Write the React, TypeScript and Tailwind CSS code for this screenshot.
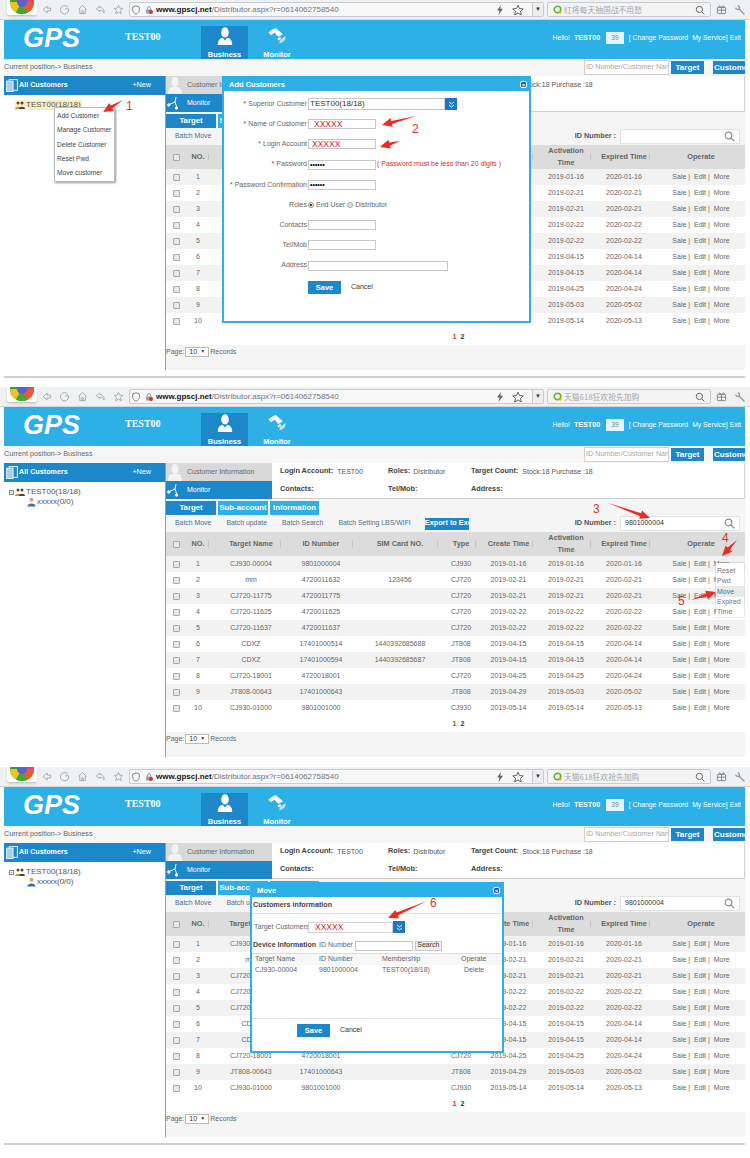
import React from "react";

const ROWS = [
  ["1", "CJ930-00004", "9801000004", "", "CJ930", "2019-01-16", "2019-01-16", "2020-01-16"],
  ["2", "mm", "4720011632", "123456", "CJ720", "2019-02-21", "2019-02-21", "2020-02-21"],
  ["3", "CJ720-11775", "4720011775", "", "CJ720", "2019-02-21", "2019-02-21", "2020-02-21"],
  ["4", "CJ720-11625", "4720011625", "", "CJ720", "2019-02-22", "2019-02-22", "2020-02-22"],
  ["5", "CJ720-11637", "4720011637", "", "CJ720", "2019-02-22", "2019-02-22", "2020-02-22"],
  ["6", "CDXZ", "17401000514", "1440392685688", "JT808", "2019-04-15", "2019-04-15", "2020-04-14"],
  ["7", "CDXZ", "17401000594", "1440392685687", "JT808", "2019-04-15", "2019-04-15", "2020-04-14"],
  ["8", "CJ720-18001", "4720018001", "", "CJ720", "2019-04-25", "2019-04-25", "2020-04-24"],
  ["9", "JT808-00643", "17401000643", "", "JT808", "2019-04-29", "2019-05-03", "2020-05-02"],
  ["10", "CJ930-01000", "9801001000", "", "CJ930", "2019-05-14", "2019-05-14", "2020-05-13"],
];

const COLS = "grid grid-cols-[21px_22px_84px_56px_102px_20px_75px_40px_76px_78px_1fr]";

function Cell({ children, sep }: { children?: React.ReactNode; sep?: string }) {
  return (
    <div className="relative flex items-center justify-center whitespace-nowrap">
      {children}
      {sep && <span className={`absolute top-1/2 h-[7px] w-px -translate-y-1/2 bg-[#c4c4c4] ${sep}`} />}
    </div>
  );
}

function Check() {
  return <span className="block h-[7px] w-[7px] rounded-[1px] border border-[#a9a9a9] bg-[#e8e8e8]" />;
}

function Arrow({ x1, y1, x2, y2 }: { x1: number; y1: number; x2: number; y2: number }) {
  const dx = x2 - x1;
  const dy = y2 - y1;
  const len = Math.hypot(dx, dy);
  const ux = dx / len;
  const uy = dy / len;
  const nx = -uy;
  const ny = ux;
  const hx = x2 - ux * 10;
  const hy = y2 - uy * 10;
  const pts = [
    [x1, y1],
    [hx + nx * 1.6, hy + ny * 1.6],
    [hx + nx * 4.5, hy + ny * 4.5],
    [x2, y2],
    [hx - nx * 4.5, hy - ny * 4.5],
    [hx - nx * 1.6, hy - ny * 1.6],
  ]
    .map((p) => p.join(","))
    .join(" ");
  return <polygon points={pts} fill="#ee2b24" />;
}

function Overlay({
  arrows,
  nums,
}: {
  arrows: [number, number, number, number][];
  nums: [string, number, number][];
}) {
  return (
    <>
      <svg className="pointer-events-none absolute left-0 top-0 z-30 h-[370px] w-[750px]" viewBox="0 0 750 370">
        {arrows.map((a, i) => (
          <Arrow key={i} x1={a[0]} y1={a[1]} x2={a[2]} y2={a[3]} />
        ))}
      </svg>
      {nums.map(([n, x, y]) => (
        <span
          key={n}
          className="absolute z-30 font-['Liberation_Sans',sans-serif] text-[12px] leading-none text-[#d9342b]"
          style={{ left: x, top: y }}
        >
          {n}
        </span>
      ))}
    </>
  );
}

function LogoPie() {
  return (
    <svg width="24" height="15" viewBox="0 0 24 15" className="block">
      <circle cx="12" cy="2" r="12" fill="#3c9e3a" />
      <path d="M12 2 L0 2 A12 12 0 0 0 6 12.4 Z" fill="#f0c419" />
      <path d="M12 2 L6 12.4 A12 12 0 0 0 17 13 Z" fill="#46a63c" />
      <path d="M12 2 L17 13 A12 12 0 0 0 24 2 Z" fill="#ec5a2e" />
      <path d="M12 2 L24 2 A12 12 0 0 0 22 -5 Z" fill="#d8408a" />
      <circle cx="12" cy="2" r="5" fill="#5b5fd0" />
    </svg>
  );
}

function NavIcon({ d }: { d: string }) {
  return (
    <svg width="11" height="11" viewBox="0 0 16 16" fill="none" stroke="#9aa0a6" strokeWidth="1.2">
      <path d={d} />
    </svg>
  );
}

function BrowserBar({ search }: { search: string }) {
  return (
    <div className="flex h-[20px] items-center border-b border-[#d4d6d8] bg-[#f0f1f2] pr-[4px] font-['Liberation_Sans',sans-serif]">
      <div className="ml-[7px] h-[16px] w-[30px] self-start overflow-hidden rounded-b-[3px] border-b border-[#c9c9c9] bg-white px-[3px] shadow-sm">
        <LogoPie />
      </div>
      <div className="ml-[4px] flex items-center gap-[7px]">
        <NavIcon d="M9 3 L3 8 L9 13 V10 H14 V6 H9 Z" />
        <NavIcon d="M13 5 A6 6 0 1 0 14 9 M9 7 H14 V10" />
        <NavIcon d="M2 8 L8 2 L14 8 M4 7 V14 H12 V7 M7 14 V10 H9 V14" />
        <NavIcon d="M7 3 L2 7 L7 11 V9 C10 9 12 10 13 13 C14 8 11 5 7 5 Z" />
        <NavIcon d="M8 2 L10 6 L14 6.5 L11 9.5 L12 14 L8 12 L4 14 L5 9.5 L2 6.5 L6 6 Z" />
      </div>
      <div className="ml-[5px] flex h-[15px] flex-1 items-center rounded-[2px] border border-[#c8ccd0] bg-[#f8f8f8] pl-[2px]">
        <svg width="8" height="10" viewBox="0 0 8 10" fill="none" stroke="#7d8893" strokeWidth="1">
          <path d="M4 .8 L7.3 2 V5 C7.3 7 6 8.4 4 9.3 C2 8.4 .7 7 .7 5 V2 Z" />
        </svg>
        <svg width="8" height="8" viewBox="0 0 8 8" className="ml-[5px]">
          <rect x="1" y="3.5" width="6" height="4" fill="#9aa0a6" />
          <circle cx="6" cy="6" r="2" fill="#d9342b" />
          <path d="M2.5 3.5 V2 A1.5 1.5 0 0 1 5.5 2 V3.5" fill="none" stroke="#9aa0a6" />
        </svg>
        <span className="ml-[3px] whitespace-nowrap text-[8px] leading-none text-[#6f7680]">
          <b className="text-[#161616]">www.gpscj.net</b>/Distributor.aspx?r=0614062758540
        </span>
        <svg width="6" height="10" viewBox="0 0 6 10" fill="#666" className="ml-auto mr-[9px]">
          <path d="M4 0 L0 5.5 H2.5 L1.5 10 L6 3.8 H3.3 Z" />
        </svg>
        <svg width="12" height="12" viewBox="0 0 16 16" fill="none" stroke="#555" strokeWidth="1.2" className="mr-[8px]">
          <path d="M8 1.5 L10 6 L15 6.5 L11.3 9.8 L12.4 14.6 L8 12 L3.6 14.6 L4.7 9.8 L1 6.5 L6 6 Z" />
        </svg>
        <span className="flex h-full w-[11px] items-center justify-center border-l border-[#c8ccd0] bg-[#eee] text-[6px] text-[#333]">▼</span>
      </div>
      <div className="ml-[3px] flex h-[15px] w-[164px] items-center rounded-[2px] border border-[#c8ccd0] bg-[#f4f4f4] px-[5px]">
        <svg width="9" height="9" viewBox="0 0 10 10" fill="none" strokeWidth="1.8">
          <circle cx="5" cy="5" r="3.6" stroke="#5cb531" />
          <path d="M6.5 6.5 L9 9" stroke="#f0a51e" />
        </svg>
        <span className="ml-[2px] whitespace-nowrap font-['Noto_Sans_CJK_SC','Liberation_Sans',sans-serif] text-[7.8px] leading-none text-[#a3a7ab]">{search}</span>
        <svg width="10" height="10" viewBox="0 0 16 16" fill="none" stroke="#666" strokeWidth="1.6" className="ml-auto">
          <circle cx="7" cy="7" r="5" />
          <path d="M11 11 L15 15" />
        </svg>
      </div>
      <svg width="11" height="11" viewBox="0 0 16 16" fill="none" stroke="#777" strokeWidth="1.2" className="ml-[5px]">
        <rect x="2" y="5" width="12" height="9" rx="1" />
        <path d="M2 9 H14 M8 5 V14 M8 5 C5 1 3 3 5 5 M8 5 C11 1 13 3 11 5" />
      </svg>
      <svg width="12" height="12" viewBox="0 0 16 16" fill="none" stroke="#999" strokeWidth="1.8" className="ml-[7px]">
        <path d="M6 6 L14 14 M2 5 A4 4 0 0 0 7 7 M5 2 A4 4 0 0 1 7 7" />
      </svg>
    </div>
  );
}

function GpsHeader({ count }: { count: string }) {
  return (
    <div className="ml-[4px] mr-[5px] flex h-[39px] bg-[#2cb0e5] font-['Liberation_Sans',sans-serif] text-white">
      <div className="w-[75px] pl-[19px] pt-[2px] text-[27px] font-bold italic leading-[32px]">GPS</div>
      <div className="ml-[46px] w-[76px] pt-[11px] font-['Liberation_Serif',serif] text-[10px] font-bold leading-[12px]">TEST00</div>
      <div className="mt-[6px] flex h-[33px] w-[47px] flex-col items-center bg-[#1d88c9] pt-[1px] text-[7.5px] font-bold">
        <svg width="16" height="19" viewBox="0 0 16 21" fill="white">
          <ellipse cx="8" cy="6" rx="4.2" ry="5.6" />
          <path d="M0 20 C0 14 3 12.5 5.5 12 L8 15 L10.5 12 C13 12.5 16 14 16 20 Z" />
        </svg>
        <span className="mt-[5px] leading-[8px]">Business</span>
      </div>
      <div className="ml-[4px] mt-[6px] flex h-[33px] w-[50px] flex-col items-center pt-[1px] text-[7.5px] font-bold">
        <svg width="20" height="19" viewBox="0 0 21 21" fill="white">
          <path d="M5 3 L9 1 L17 8 L12 11 Z" />
          <path d="M1 6 L5 3 L8 6 L4 9 Z" />
          <path d="M11 13 L14 11 L15 13 L12 15 Z" />
          <path d="M13 18 A7 7 0 0 0 20 10 L14 14 Z" fill="#bfe3f5" />
        </svg>
        <span className="mt-[5px] leading-[8px]">Monitor</span>
      </div>
      <div className="ml-auto flex items-center self-start whitespace-nowrap pr-[4px] pt-[12px] text-[6.8px] leading-[12px]">
        <span>Hello!</span>
        <b className="ml-[4px] text-[7.2px]">TEST00</b>
        <span className="ml-[6px] bg-[#e6f4fb] px-[5px] text-[#7a8a94]">{count}</span>
        <span className="ml-[5px]">[ Change Password</span>
        <span className="ml-[4px]">My Service]</span>
        <span className="ml-[2px]">Exit</span>
      </div>
    </div>
  );
}

function Breadcrumb() {
  return (
    <div className="ml-[4px] mr-[5px] flex h-[17px] items-center bg-[#f6f6f6] font-['Liberation_Sans',sans-serif] text-[7.2px] text-[#666]">
      <span>Current position-&gt; Business</span>
      <div className="ml-auto flex h-[15px] w-[85px] items-center overflow-hidden whitespace-nowrap border border-[#d0d0d0] bg-white pl-[1px] text-[7.2px] text-[#a8a8a8]">
        ID Number/Customer Name
      </div>
      <span className="ml-[2px] flex h-[13px] w-[33px] items-center justify-center bg-[#1d88c9] text-[8px] font-bold text-white">Target</span>
      <span className="ml-[9px] flex h-[13px] w-[32px] items-center overflow-hidden whitespace-nowrap bg-[#1d88c9] pl-[1px] text-[8px] font-bold text-white">Customer Information</span>
    </div>
  );
}

function Tree({ menu }: { menu?: boolean }) {
  return (
    <div className="w-[161px] bg-white">
      <div className="flex h-[19px] items-center bg-[#1d88c9] pl-[2px] pr-[14px] text-[7.2px] font-bold text-white">
        <svg width="12" height="13" viewBox="0 0 11 12" fill="none" stroke="#d5e9f5" strokeWidth="1">
          <rect x="3" y=".5" width="7.5" height="10" />
          <rect x=".5" y="2" width="6" height="9.5" fill="#a9cfe8" />
        </svg>
        <span className="ml-[1px]">All Customers</span>
        <span className="ml-auto font-normal">+New</span>
      </div>
      <div className="relative pl-[11px] pt-[5px] text-[8px] leading-[10px] text-[#555]">
        {menu ? (
          <div className="flex items-center">
            <span className="flex w-fit items-center bg-[#fbeec6] pr-[1px] text-[#555]">
              <GroupIcon />
              TEST00(18/18)
            </span>
          </div>
        ) : (
          <>
            <div className="-ml-[6px] flex items-center">
              <span className="mr-[1px] flex h-[5px] w-[5px] items-center justify-center border border-[#888] text-[5px] leading-none">−</span>
              <GroupIcon />
              <span>TEST00(18/18)</span>
            </div>
            <div className="ml-[12px] flex items-center">
              <UserIcon />
              <span>xxxxx(0/0)</span>
            </div>
          </>
        )}
        {menu && (
          <div className="absolute left-[50px] top-[12px] z-10 flex w-[61px] flex-col border border-[#bbb] bg-white py-[1px] pl-[2px] shadow-[1px_1px_2px_rgba(0,0,0,0.4)]">
            {["Add Customer", "Manage Customer", "Delete Customer", "Reset Pwd", "Move customer"].map((t) => (
              <span key={t} className="whitespace-nowrap text-[6.6px] leading-[14.3px] text-[#444]">{t}</span>
            ))}
          </div>
        )}
      </div>
    </div>
  );
}

function GroupIcon() {
  return (
    <svg width="10" height="8" viewBox="0 0 10 8" className="mr-[1px]">
      <circle cx="3" cy="2" r="1.5" fill="#6b4a2a" />
      <circle cx="7" cy="2" r="1.5" fill="#444" />
      <path d="M0 8 C0 5 6 5 6 8 Z" fill="#c9963c" />
      <path d="M4 8 C4 5 10 5 10 8 Z" fill="#444" />
    </svg>
  );
}

function UserIcon() {
  return (
    <svg width="9" height="10" viewBox="0 0 10 10" className="mr-[1px]">
      <circle cx="5" cy="2.5" r="2.2" fill="#d9a36c" />
      <path d="M0.5 10 C0.5 5.5 9.5 5.5 9.5 10 Z" fill="#2d6fb8" />
    </svg>
  );
}

function InfoArea() {
  return (
    <div className="flex h-[36px] border-b border-r border-[#cfcfcf] bg-white text-[7px] text-[#555]">
      <div className="w-[106px] shrink-0">
        <div className="flex h-[18px] items-center overflow-hidden bg-[#d9d9d9] text-[#666]">
          <svg width="14" height="18" viewBox="0 0 14 18" fill="#f4f4f4" className="ml-[2px]">
            <ellipse cx="7" cy="6" rx="3.6" ry="5" />
            <path d="M0 18 C0 12 3 11 5 11 L9 11 C11 11 14 12 14 18 Z" />
          </svg>
          <span className="ml-[5px]">Customer Information</span>
        </div>
        <div className="flex h-[18px] items-center bg-[#1d88c9] text-white">
          <svg width="14" height="14" viewBox="0 0 14 14" fill="none" stroke="white" strokeWidth="1" className="ml-[1px]">
            <path d="M1 9 L8 6 L9 1 M8 6 L10 12" />
            <circle cx="1.8" cy="9" r="1.2" fill="white" />
            <circle cx="9.5" cy="12" r="1.2" fill="white" />
          </svg>
          <span className="ml-[6px]">Monitor</span>
        </div>
      </div>
      <div className="grid flex-1 grid-cols-[108px_83px_1fr] grid-rows-2 pl-[8px]">
        <div className="flex items-center"><b className="mr-[4px] text-[7.3px] text-[#444]">Login Account:</b>TEST00</div>
        <div className="flex items-center"><b className="mr-[3px] text-[7.3px] text-[#444]">Roles:</b>Distributor</div>
        <div className="flex items-center"><b className="mr-[4px] text-[7.3px] text-[#444]">Target Count:</b>Stock:18 Purchase :18</div>
        <div className="flex items-center"><b className="text-[7.3px] text-[#444]">Contacts:</b></div>
        <div className="flex items-center"><b className="text-[7.3px] text-[#444]">Tel/Mob:</b></div>
        <div className="flex items-center"><b className="text-[7.3px] text-[#444]">Address:</b></div>
      </div>
    </div>
  );
}

function Toolbar({ value }: { value: string }) {
  return (
    <>
      <div className="mt-[2px] flex h-[14px] items-stretch text-[7.8px] font-bold text-white">
        <span className="flex w-[50px] items-center justify-center bg-[#1d88c9]">Target</span>
        <span className="ml-[2px] flex w-[50px] items-center justify-center bg-[#2cb0e5]">Sub-account</span>
        <span className="ml-[2px] flex w-[49px] items-center justify-center bg-[#2cb0e5]">Information</span>
      </div>
      <div className="flex h-[17px] items-center whitespace-nowrap pl-[9px] pr-[5px] text-[6.9px] text-[#4c6d8f]">
        <span>Batch Move</span>
        <span className="ml-[15px]">Batch update</span>
        <span className="ml-[15px]">Batch Search</span>
        <span className="ml-[15px]">Batch Setting LBS/WIFI</span>
        <span className="ml-[14px] flex h-[12px] w-[44px] items-center overflow-hidden bg-[#1d88c9] text-[7.3px] font-bold text-white">Export to Excel</span>
        <b className="ml-auto text-[7.3px] text-[#555]">ID Number :</b>
        <div className="ml-[4px] flex h-[15px] w-[120px] items-center border border-[#e2e2e2] bg-white pl-[4px] pr-[4px] text-[7px] text-[#333]">
          <span>{value}</span>
          <svg width="11" height="11" viewBox="0 0 16 16" fill="none" stroke="#8d8d8d" strokeWidth="1.8" className="ml-auto">
            <circle cx="6.5" cy="6.5" r="4.8" />
            <path d="M10 10 L15 15" />
          </svg>
        </div>
      </div>
    </>
  );
}

function Table() {
  const heads: [React.ReactNode, string][] = [
    [<Check key="c" />, ""],
    ["NO.", "right-0"],
    ["Target Name", "right-[12px]"],
    ["ID Number", "right-[-4px]"],
    ["SIM Card NO.", "right-[13px]"],
    ["Type", "right-[-5px]"],
    ["Create Time", "right-[13px]"],
    [<span key="a" className="text-center leading-[12px]">Activation<br />Time</span>, "right-[-5px]"],
    ["Expired Time", "right-[12px]"],
    ["Operate", ""],
    ["", ""],
  ];
  return (
    <div className="text-[7px] text-[#666]">
      <div className={`${COLS} h-[24px] bg-[#dcdcdc] text-[7.3px] font-bold text-[#666]`}>
        {heads.map((h, i) => (
          <Cell key={i} sep={h[1]}>{h[0]}</Cell>
        ))}
      </div>
      {ROWS.map((r, i) => (
        <div key={r[0]} className={`${COLS} h-[16px] ${i % 2 ? "bg-white" : "bg-[#f2f2f2]"}`}>
          <Cell><Check /></Cell>
          {r.map((c, j) => (
            <Cell key={j}>{c}</Cell>
          ))}
          <Cell>Sale&nbsp;|&nbsp;&nbsp;Edit&nbsp;|&nbsp;&nbsp;More</Cell>
          <Cell />
        </div>
      ))}
    </div>
  );
}

function Pager() {
  return (
    <>
      <div className="flex h-[16px] items-center justify-center bg-white pl-[6px] text-[7.3px] font-bold text-[#333]">
        <span className="text-[#d9342b]">1</span>
        <span className="ml-[4px]">2</span>
      </div>
      <div className="flex h-[14px] items-center bg-[#f5f5f5] text-[7px] text-[#666]">
        Page:
        <span className="ml-px flex h-[10px] w-[24px] items-center justify-between border border-[#bbb] bg-white px-[3px] text-[#333]">10<span className="text-[5px]">▼</span></span>
        <span className="ml-px">Records</span>
      </div>
    </>
  );
}

function Panel({
  search,
  count,
  value,
  menu,
  children,
}: {
  search: string;
  count: string;
  value: string;
  menu?: boolean;
  children?: React.ReactNode;
}) {
  return (
    <section className="relative h-[370px] overflow-hidden font-['Liberation_Sans',sans-serif]">
      <BrowserBar search={search} />
      <GpsHeader count={count} />
      <Breadcrumb />
      <div className="ml-[4px] mr-[5px] flex h-[294px]">
        <Tree menu={menu} />
        <div className="flex-1 overflow-hidden border-l border-[#9a9a9a] bg-[#f5f5f5]">
          <InfoArea />
          <Toolbar value={value} />
          <Table />
          <Pager />
        </div>
      </div>
      {children}
    </section>
  );
}

function Modal({
  title,
  className,
  children,
}: {
  title: string;
  className: string;
  children: React.ReactNode;
}) {
  return (
    <div className={`absolute z-20 flex flex-col border-2 border-[#2cb0e5] bg-white font-['Liberation_Sans',sans-serif] text-[7px] text-[#666] ${className}`}>
      <div className="flex h-[13px] shrink-0 items-center bg-[#2cb0e5] pl-[5px] pr-[2px] text-[7.5px] font-bold text-white">
        {title}
        <span className="ml-auto flex h-[7px] w-[7px] items-center justify-center rounded-[2px] border border-white bg-[#2b55b5] text-[6px] leading-none">×</span>
      </div>
      {children}
    </div>
  );
}

const fieldCls = "h-[10px] border border-[#c7c7c7] bg-white";

function FormRow({ label, req, children }: { label: string; req?: boolean; children?: React.ReactNode }) {
  return (
    <div className="flex h-[20.2px] items-center">
      <div className="w-[83px] whitespace-nowrap text-right">
        {req && <span className="text-[#e02020]">* </span>}
        {label}
      </div>
      <div className="flex items-center pl-[1px]">{children}</div>
    </div>
  );
}

const Drop = () => (
  <span className="flex h-[12px] w-[12px] items-center justify-center bg-[#1d78c4]">
    <svg width="7" height="7" viewBox="0 0 7 7" fill="none" stroke="white" strokeWidth="0.9">
      <path d="M1 1 L3.5 3 L6 1 M1 4 L3.5 6 L6 4" />
    </svg>
  </span>
);

function AddCustomerModal() {
  return (
    <Modal title="Add Customers" className="left-[222px] top-[76px] h-[247px] w-[309px]">
      <div className="flex flex-col pt-[3px]">
        <FormRow label="Superior Customer" req>
          <div className="flex items-center">
            <span className="flex h-[12px] w-[137px] items-center border border-[#c7c7c7] bg-white pl-px text-[8px] text-[#333]">TEST00(18/18)</span>
            <Drop />
          </div>
        </FormRow>
        <FormRow label="Name of Customer" req>
          <span className={`${fieldCls} flex w-[68px] items-center pl-[5px] text-[8.5px] text-[#e02020]`}>XXXXX</span>
        </FormRow>
        <FormRow label="Login Account" req>
          <span className={`${fieldCls} flex w-[68px] items-center pl-[3px] text-[8.5px] text-[#e02020]`}>XXXXX</span>
        </FormRow>
        <FormRow label="Password" req>
          <span className={`${fieldCls} flex w-[68px] items-center pl-px text-[7px] leading-none text-black`}>••••••</span>
          <span className="ml-[1px] whitespace-nowrap text-[#d0312d]">( Password must be less than 20 digits )</span>
        </FormRow>
        <FormRow label="Password Confirmation" req>
          <span className={`${fieldCls} flex w-[68px] items-center pl-px text-[7px] leading-none text-black`}>••••••</span>
        </FormRow>
        <FormRow label="Roles">
          <span className="h-[6px] w-[6px] rounded-full border border-[#999] bg-[radial-gradient(circle,#444_35%,#e8e8e8_40%)]" />
          <span className="ml-[2px]">End User</span>
          <span className="ml-[2px] h-[6px] w-[6px] rounded-full border border-[#aaa] bg-[#e4e4e4]" />
          <span className="ml-[2px]">Distributor</span>
        </FormRow>
        <FormRow label="Contacts"><span className={`${fieldCls} w-[68px]`} /></FormRow>
        <FormRow label="Tel/Mob"><span className={`${fieldCls} w-[68px]`} /></FormRow>
        <FormRow label="Address"><span className={`${fieldCls} w-[140px]`} /></FormRow>
        <div className="mt-[5px] flex items-center pl-[84px]">
          <span className="flex h-[13px] w-[33px] items-center justify-center bg-[#1d88c9] text-[7.5px] font-bold text-white">Save</span>
          <span className="ml-[10px] text-[#333]">Cancel</span>
        </div>
      </div>
    </Modal>
  );
}

function MoveModal() {
  return (
    <Modal title="Move" className="left-[250px] top-[115px] h-[171px] w-[254px]">
      <div className="flex flex-1 flex-col">
        <div className="flex h-[17px] items-center border-b border-[#ddd] pl-[1px] text-[7.2px] font-bold text-[#444]">Customers information</div>
        <div className="mt-[6px] flex h-[14px] items-center pl-[2px]">
          <span className="w-[54px] whitespace-nowrap">Target Customers</span>
          <span className="flex h-[11px] w-[85px] items-center border border-[#d4d4d4] bg-white pl-[6px] text-[8.5px] text-[#e02020]">XXXXX</span>
          <Drop />
        </div>
        <div className="mt-[5px] flex h-[13px] items-center pl-[1px]">
          <b className="text-[7px] text-[#444]">Device Information</b>
          <span className="ml-[3px]">ID Number</span>
          <span className={`${fieldCls} ml-[2px] w-[58px]`} />
          <span className="ml-[2px] flex h-[10px] w-[27px] items-center justify-center border border-[#c7c7c7] bg-[#f1f1f1] text-[#333]">Search</span>
        </div>
        <div className="mt-[1px] grid h-[12px] grid-cols-[64px_63px_79px_1fr] items-center border-t border-[#ddd] bg-[#f7f7f7] pl-[3px]">
          <span>Target Name</span><span>ID Number</span><span>Membership</span><span>Operate</span>
        </div>
        <div className="grid h-[11px] grid-cols-[64px_63px_79px_1fr] items-center pl-[3px]">
          <span>CJ930-00004</span><span>9801000004</span><span>TEST00(18/18)</span><span className="pl-[3px]">Delete</span>
        </div>
        <div className="mt-[42px] flex items-center border-t border-[#e2e2e2] pl-[45px] pt-[5px]">
          <span className="flex h-[13px] w-[33px] items-center justify-center bg-[#1d88c9] text-[7.5px] font-bold text-white">Save</span>
          <span className="ml-[10px] text-[#333]">Cancel</span>
        </div>
      </div>
    </Modal>
  );
}

function MoreMenu() {
  return (
    <div className="absolute left-[716px] top-[176px] z-20 flex w-[28px] flex-col bg-white pt-[3px] font-['Liberation_Sans',sans-serif] text-[7px] leading-[10px] text-[#777] shadow-[0_0_1px_rgba(0,0,0,0.5)]">
      <span className="pl-px">Reset<br />Pwd</span>
      <span className="bg-[#eaeaea] pl-px leading-[11px] text-[#3a6ea5]">Move</span>
      <span className="pl-px">Expired<br />Time</span>
    </div>
  );
}

export default function App() {
  return (
    <div className="w-[750px] bg-white">
      <Panel search="红将每天抽国战不用愁" count="39" value="" menu>
        <AddCustomerModal />
        <Overlay
          arrows={[[123, 100, 103, 112], [416, 116, 382, 125], [400, 141, 380, 147]]}
          nums={[["1", 126, 100], ["2", 412, 123]]}
        />
      </Panel>
      <div className="mb-[9px] ml-[4px] mt-[6px] h-[2px] w-[741px] bg-[#cfcfcf]" />
      <Panel search="天猫618狂欢抢先加购" count="39" value="9801000004">
        <MoreMenu />
        <Overlay
          arrows={[[608, 116, 650, 131], [737, 153, 722, 169], [691, 213, 716, 205]]}
          nums={[["3", 593, 116], ["4", 722, 145], ["5", 678, 208]]}
        />
      </Panel>
      <div className="h-[10px]" />
      <Panel search="天猫618狂欢抢先加购" count="39" value="9801000004">
        <MoveModal />
        <Overlay arrows={[[427, 134, 388, 151]]} nums={[["6", 430, 130]]} />
      </Panel>
      <div className="ml-[4px] mt-[6px] h-[2px] w-[741px] bg-[#cfcfcf]" />
    </div>
  );
}
